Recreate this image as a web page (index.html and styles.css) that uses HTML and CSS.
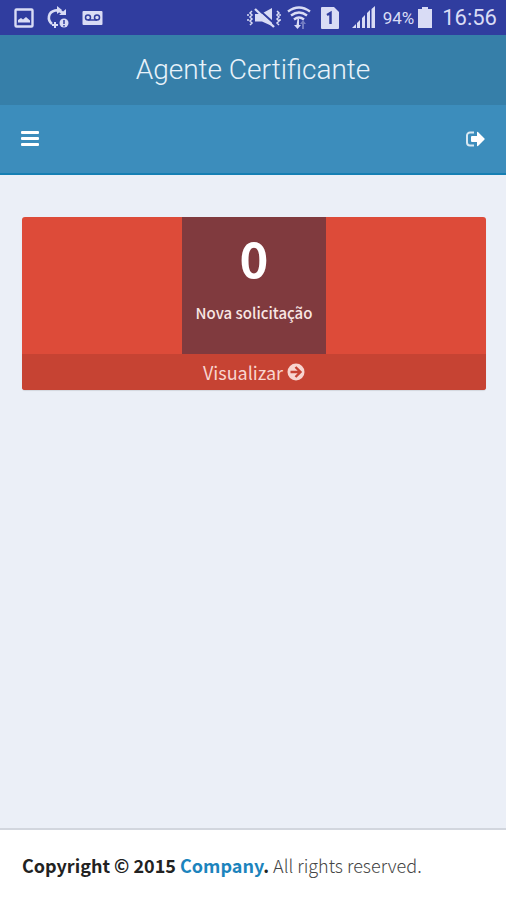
FILE: index.html
```html
<!DOCTYPE html>
<html lang="pt-BR">
<head>
    <meta charset="UTF-8">
    <meta name="viewport" content="width=device-width, initial-scale=1">
    <title>Agente Certificante</title>
    <link rel="stylesheet" href="styles.css">
</head>
<body>
    <div class="status-bar">
        <div class="status-group notifications">
            <svg width="20" height="20" viewBox="0 0 20 20">
                <rect x="1.500" y="1.500" width="17" height="17" rx="1" fill="none" stroke="currentColor" stroke-width="2.400"/>
                <path fill="currentColor" d="M4 14.500V12l3-2 2 1.500L12 9l4 3.500v2z"/>
            </svg>
            <svg width="24" height="24" viewBox="0 0 24 24">
                <path fill="none" stroke="currentColor" stroke-width="2.600" d="M6 18C1 14 2 6 9 4.500c3-.5 6 .5 8 3"/>
                <path fill="currentColor" d="M11 0l5 4-5 4zM13 9h7V3z"/>
                <path fill="none" stroke="currentColor" stroke-width="2" d="M6 19h6M9 16v6"/>
                <circle cx="18" cy="17" r="4.500" fill="currentColor"/>
                <path stroke="#303d9f" stroke-width="1.500" d="M18 14v4M18 19v1.500"/>
            </svg>
            <svg width="22" height="16" viewBox="0 0 22 16">
                <rect x="0.500" y="1" width="20" height="14" rx="1" fill="currentColor"/>
                <g fill="none" stroke="#303d9f" stroke-width="1.500">
                    <circle cx="6" cy="7.500" r="2.500"/>
                    <circle cx="15" cy="7.500" r="2.500"/>
                    <path d="M6 10h9"/>
                </g>
            </svg>
        </div>
        <div class="status-group system">
            <svg width="34" height="24" viewBox="0 0 34 24">
                <path fill="currentColor" d="M8 8h6L25 2v18l-10-4.500H8z"/>
                <path stroke="#303d9f" stroke-width="2" d="M10 2l19 17"/>
                <path stroke="currentColor" stroke-width="2.400" d="M8 3l19 18"/>
                <path fill="none" stroke="currentColor" stroke-width="1.500" d="M5 5L3 7l2 2-2 2 2 2-2 2 2 2-2 2M1 8v2M1 13v2M30 5l2 2-2 2 2 2-2 2 2 2-2 2 2 2M33 8v2M33 13v2"/>
            </svg>
            <svg class="wifi" width="24" height="24" viewBox="0 0 24 24">
                <g fill="none" stroke="currentColor" stroke-width="2.400">
                    <path d="M1 5.500q11-8 22 0M4 9.500q8-6 16 0M7 13.500q5-4 10 0"/>
                </g>
                <path fill="currentColor" d="M12 13v6h2l-3.500 4L7 19h2.500l1-6z"/>
                <path fill="currentColor" opacity=".4" d="M16 14l3 4h-2v5h-2v-5h-2z"/>
            </svg>
            <svg class="sim" width="20" height="24" viewBox="0 0 20 24">
                <path fill="currentColor" d="M2 1h12l5 5v16a1 1 0 0 1-1 1H2a1 1 0 0 1-1-1V2a1 1 0 0 1 1-1z"/>
                <path fill="none" stroke="#303d9f" stroke-width="2.500" d="M7 9l3.500-2v11"/>
            </svg>
            <svg class="signal" width="24" height="24" viewBox="0 0 24 24">
                <path fill="currentColor" d="M0 22l4-4v4zM5 17l3-3v8H5zM10 12l3-3v13h-3zM15 7l3-3v18h-3zM19.500 3L23 0v22h-3.500z"/>
            </svg>
            <span class="battery-level">94%</span>
            <svg class="battery" width="16" height="22" viewBox="0 0 16 22">
                <path fill="currentColor" d="M5 0h6v2h4v19H1V2h4z"/>
            </svg>
            <span class="clock">16:56</span>
        </div>
    </div>

    <header class="main-header">
        <h1 class="logo">Agente Certificante</h1>
        <nav class="navbar">
            <button class="nav-btn" type="button" aria-label="Menu">
                <svg width="18" height="16" viewBox="0 0 18 16">
                    <path fill="currentColor" d="M1 0h16a1 1 0 0 1 1 1v1a1 1 0 0 1-1 1H1a1 1 0 0 1-1-1V1a1 1 0 0 1 1-1zM1 6h16a1 1 0 0 1 1 1v1a1 1 0 0 1-1 1H1a1 1 0 0 1-1-1V7a1 1 0 0 1 1-1zM1 12h16a1 1 0 0 1 1 1v1a1 1 0 0 1-1 1H1a1 1 0 0 1-1-1v-1a1 1 0 0 1 1-1z"/>
                </svg>
            </button>
            <button class="nav-btn" type="button" aria-label="Sair">
                <svg width="19" height="16" viewBox="0 0 19 16">
                    <path fill="none" stroke="currentColor" stroke-opacity=".8" stroke-width="2" d="M8 1.500H4a3 3 0 0 0-3 3v7a3 3 0 0 0 3 3h4"/>
                    <path fill="currentColor" d="M6 5h5V1.500q0-1 1-.5l6.500 6.500q.5.500 0 1L12 15q-1 .5-1-.5V11H6q-1 0-1-1V6q0-1 1-1z"/>
                </svg>
            </button>
        </nav>
    </header>

    <main class="content">
        <section class="small-box">
            <div class="inner">
                <h2 class="count">0</h2>
                <p class="label">Nova solicitação</p>
            </div>
            <a class="small-box-footer" href="#">
                Visualizar
                <svg width="18" height="18" viewBox="0 0 18 18">
                    <circle cx="9" cy="9" r="8.500" fill="currentColor"/>
                    <path fill="none" stroke="#c64333" stroke-width="2.400" d="M3.500 9H13M8.500 4l5 5-5 5"/>
                </svg>
            </a>
        </section>
    </main>

    <footer class="main-footer">
        <strong>Copyright © 2015 <a href="#">Company</a>.</strong> All rights reserved.
    </footer>
</body>
</html>
```
FILE: styles.css
```css
* {
    box-sizing: border-box;
}

body {
    margin: 0;
    min-height: 100vh;
    display: flex;
    flex-direction: column;
    background: #ebeff7;
    font-family: "Noto Sans CJK SC", "Open Sans", sans-serif;
    font-size: 18px;
    line-height: 24px;
    color: #444;
}

h1, h2, p {
    margin: 0;
}

svg {
    display: block;
    flex: none;
}

a {
    color: #1c84bd;
    text-decoration: none;
}

/* Android status bar */
.status-bar {
    display: flex;
    justify-content: space-between;
    align-items: center;
    height: 35px;
    padding: 0 9px 0 14px;
    background: #303d9f;
    color: #d9dcf5;
    font-family: Roboto, sans-serif;
}

.status-group {
    display: flex;
    align-items: center;
}

.notifications {
    gap: 12px;
}

.wifi {
    margin-left: 6px;
}

.sim {
    margin-left: 9px;
}

.signal {
    margin-left: 12px;
}

.battery-level {
    margin-left: 7px;
    font-size: 17px;
}

.battery {
    margin-left: 3px;
}

.clock {
    margin-left: 9px;
    font-size: 22px;
}

/* Header */
.main-header {
    color: #fff;
}

.logo {
    padding: 17px 20px;
    background: #367fa9;
    color: #e8f2fa;
    font-family: Roboto, sans-serif;
    font-size: 28px;
    font-weight: 300;
    line-height: 36px;
    text-align: center;
}

.navbar {
    display: flex;
    justify-content: space-between;
    align-items: center;
    height: 70px;
    padding: 0 11px;
    background: #3c8dbc;
    border-bottom: 2px solid #167fb3;
}

.nav-btn {
    padding: 10px;
    border: none;
    background: none;
    color: #fff;
    cursor: pointer;
}

/* Content */
.content {
    flex: 1;
    padding: 42px 20px 20px 22px;
}

.small-box {
    display: flex;
    flex-direction: column;
    align-items: center;
    border-radius: 3px;
    background: #dd4b39;
    color: #fff;
    box-shadow: 0 1px 1px rgba(0, 0, 0, 0.1);
    overflow: hidden;
}

.inner {
    padding: 14px;
    background: #803a3e;
    text-align: center;
}

.count {
    margin-bottom: 18px;
    font-size: 49px;
    font-weight: bold;
    line-height: 52px;
}

.label {
    padding-bottom: 15px;
    color: #f8e6e3;
    font-size: 15px;
    font-weight: 500;
}

.small-box-footer {
    display: flex;
    justify-content: center;
    align-items: center;
    gap: 4px;
    width: 100%;
    padding: 6px 0;
    background: #c64333;
    color: #f8d5d0;
    font-size: 18px;
}

/* Footer */
.main-footer {
    padding: 23px 22px;
    border-top: 2px solid #d2d6de;
    background: #fff;
    font-weight: 300;
}

.main-footer strong {
    color: #222;
    font-weight: bold;
}
```
